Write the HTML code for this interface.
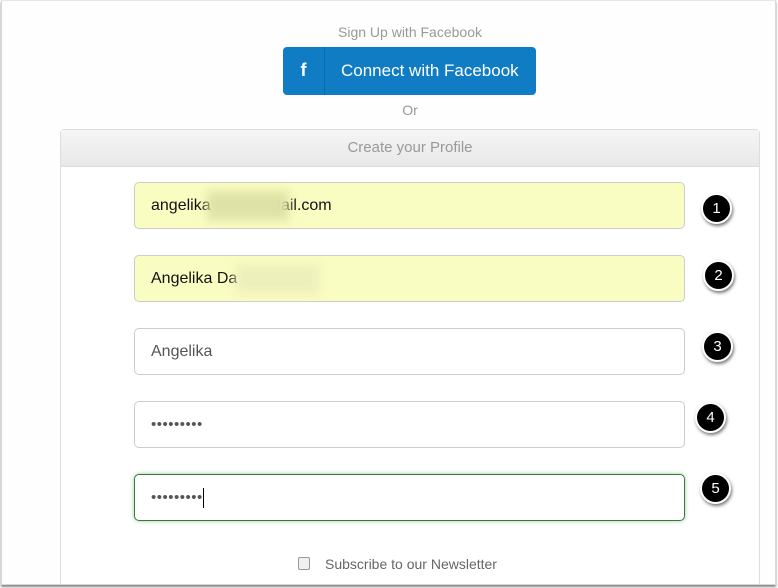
<!DOCTYPE html>
<html><head><meta charset="utf-8"><style>
*{box-sizing:border-box;margin:0;padding:0}
html,body{width:778px;height:588px;overflow:hidden}
body{background:#fff;font-family:"Liberation Sans",Arial,sans-serif;position:relative}
.frame{position:absolute;left:1px;top:0;width:775px;height:585px;border:1px solid #d8d8d8;border-top:1px solid #e6e6e6;box-shadow:0 2px 2px #888;background:#fefefe;overflow:hidden}
.w{position:absolute;left:-1px;top:-1px;width:778px;height:588px}
.t{position:absolute;color:#999;font-size:14px;text-align:center;width:778px;left:20px}
.fb{position:absolute;left:282px;top:47px;width:253px;height:48px;background:#0f7cc4;border-radius:4px;color:#fff}
.fb .ic{position:absolute;left:0;top:0;width:42px;height:48px;border-right:1px solid #0a6aa8;font-weight:bold;font-size:18px;text-align:center;line-height:46px}
.fb .lb{position:absolute;left:58px;top:14px;font-size:17px}
.panel{position:absolute;left:59px;top:129px;width:700px;height:470px;border:1px solid #ddd;border-radius:4px;background:#fff}
.ph{height:37px;background:linear-gradient(#f5f5f5,#e8e8e8);border-bottom:1px solid #ddd;color:#999;font-size:15px;text-align:center;line-height:36px}
.in{position:absolute;left:133px;width:551px;height:47px;border:1px solid #ccc;border-radius:5px;font-size:16px;color:#555;padding-left:16px;line-height:45px}
.y{background:#fafdc2;color:#111}
.g{border-color:#3c763d;box-shadow:0 0 4px #9c9}
.bl{position:absolute;top:8px;height:30px;background:#dfe2a6;filter:blur(5px)}
.b{position:absolute;width:31px;height:31px;border-radius:50%;background:#000;border:2px solid #fff;box-shadow:1px 2px 3px #777;color:#fff;font-size:15px;text-align:center;line-height:27px}
.dots{letter-spacing:0.5px;color:#555;font-size:15px}
</style></head><body>
<div class="frame"><div class="w">
<div class="t" style="top:24px">Sign Up with Facebook</div>
<div class="fb"><div class="ic">f</div><div class="lb">Connect with Facebook</div></div>
<div class="t" style="top:102px">Or</div>
<div class="panel"><div class="ph">Create your Profile</div></div>
<div class="in y" style="top:182px">angelika<span style="display:inline-block;width:57px"></span>mail.com<div class="bl" style="left:72px;width:82px"></div></div>
<div class="in y" style="top:255px">Angelika Da<div class="bl" style="left:100px;width:85px;background:#eef0bb"></div></div>
<div class="in" style="top:328px">Angelika</div>
<div class="in" style="top:401px"><span class="dots">•••••••••</span></div>
<div class="in g" style="top:474px"><span class="dots">•••••••••</span><span style="display:inline-block;width:1px;height:20px;background:#000;vertical-align:middle"></span></div>
<div class="b" style="left:700px;top:193px">1</div>
<div class="b" style="left:702px;top:260px">2</div>
<div class="b" style="left:701px;top:331px">3</div>
<div class="b" style="left:694px;top:402px">4</div>
<div class="b" style="left:699px;top:473px">5</div>
<div style="position:absolute;left:297px;top:557px;width:12px;height:13px;border:1px solid #999;border-radius:2px;background:#f0f0f0"></div>
<div style="position:absolute;left:324px;top:556px;font-size:14px;color:#666">Subscribe to our Newsletter</div>
</div></div>
</body></html>
